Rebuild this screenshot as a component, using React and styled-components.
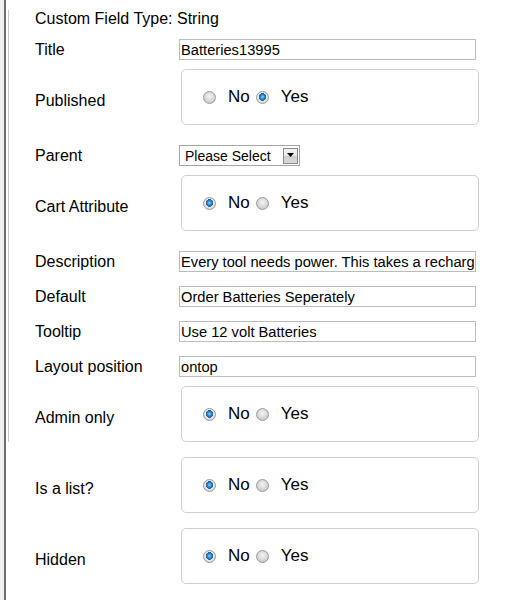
import React from "react";
import styled, { createGlobalStyle } from "styled-components";

const GlobalStyle = createGlobalStyle`
  html, body {
    margin: 0;
    padding: 0;
    background: #fff;
  }
  body {
    font-family: "Liberation Sans", Arial, sans-serif;
    color: #000;
  }
`;

const textFields = [
  { label: "Description", value: "Every tool needs power. This takes a rechargeable battery" },
  { label: "Default", value: "Order Batteries Seperately" },
  { label: "Tooltip", value: "Use 12 volt Batteries" },
  { label: "Layout position", value: "ontop" },
];

function YesNo({ name, yes }) {
  return (
    <RadioBox>
      <Radio type="radio" name={name} defaultChecked={!yes} />
      <Choice>No</Choice>
      <Radio type="radio" name={name} defaultChecked={yes} $second />
      <Choice>Yes</Choice>
    </RadioBox>
  );
}

function App() {
  return (
    <>
      <GlobalStyle />
      <Page>
        <Strip />
        <Content>
          <Section>
            <Header>Custom Field Type: String</Header>
            <Row>
              <Label>Title</Label>
              <TextInput defaultValue="Batteries13995" />
            </Row>
            <Row $radio>
              <Label $radio>Published</Label>
              <YesNo name="published" yes />
            </Row>
            <Row>
              <Label>Parent</Label>
              <FakeSelect>
                <span>Please Select</span>
                <Arrow>
                  <svg width="7" height="4" viewBox="0 0 7 4">
                    <path d="M0 0h7L3.5 4z" fill="#000" />
                  </svg>
                </Arrow>
              </FakeSelect>
            </Row>
            <Row $radio>
              <Label $radio>Cart Attribute</Label>
              <YesNo name="cart" />
            </Row>
            {textFields.map((f) => (
              <Row key={f.label}>
                <Label>{f.label}</Label>
                <TextInput defaultValue={f.value} />
              </Row>
            ))}
            <Row $radio>
              <Label $radio>Admin only</Label>
              <YesNo name="admin" />
            </Row>
          </Section>
          <Rest>
            <Row $radio>
              <Label $radio>Is a list?</Label>
              <YesNo name="list" />
            </Row>
            <Row $radio>
              <Label $radio>Hidden</Label>
              <YesNo name="hidden" />
            </Row>
          </Rest>
        </Content>
      </Page>
    </>
  );
}

export default App;

const Page = styled.div`
  display: flex;
  min-height: 600px;
`;

const Strip = styled.div`
  width: 4px;
  background: #f0f0f0;
  border-right: 2px solid #6e6e6e;
  flex-shrink: 0;
`;

const Content = styled.div`
  flex: 1;
  padding-left: 2px;
  padding-top: 10px;
`;

const Section = styled.div`
  border-left: 1px solid #c8c8c8;
  padding-left: 26px;

  & > div:last-child {
    padding-bottom: 0;
  }
`;

const Rest = styled.div`
  padding-left: 27px;
  padding-top: 13px;
`;

const Header = styled.div`
  font-size: 16px;
  line-height: 18px;
  margin-bottom: 4px;
`;

const Row = styled.div`
  display: grid;
  grid-template-columns: 144px 300px;
  align-items: center;
  padding: ${(p) => (p.$radio ? "2px 0 13px" : "7px 0")};
`;

const Label = styled.div`
  font-size: 16px;
  line-height: 18px;
  padding-top: ${(p) => (p.$radio ? "8px" : "0")};
`;

const TextInput = styled.input`
  box-sizing: border-box;
  width: 297px;
  height: 21px;
  margin: 0;
  padding: 0 1px;
  border: 1px solid #bcbcbc;
  font-family: "Liberation Sans", Arial, sans-serif;
  font-size: 14.7px;
  color: #000;
  outline: none;
`;

const FakeSelect = styled.div`
  box-sizing: border-box;
  width: 121px;
  height: 21px;
  border: 1px solid #a5a5a5;
  display: flex;
  align-items: center;
  justify-content: space-between;
  padding: 0 1px 0 5px;
  font-size: 14px;
`;

const Arrow = styled.span`
  box-sizing: border-box;
  width: 15px;
  height: 16px;
  border: 1px solid #8a8a8a;
  background: linear-gradient(#f4f4f4 0%, #e6e6e6 50%, #cfcfcf 51%, #dadada 100%);
  display: flex;
  align-items: center;
  justify-content: center;
  padding-bottom: 2px;
`;

const RadioBox = styled.div`
  box-sizing: border-box;
  width: 298px;
  height: 56px;
  margin-left: 2px;
  border: 1px solid #cfcfcf;
  border-radius: 5px;
  display: flex;
  align-items: center;
  padding-left: 21px;
`;

const Radio = styled.input`
  appearance: none;
  -webkit-appearance: none;
  box-sizing: border-box;
  width: 13px;
  height: 13px;
  margin: 0 12px 0 ${(p) => (p.$second ? "6px" : "0")};
  border-radius: 50%;
  border: 1px solid #9a9a9a;
  background: radial-gradient(circle at 50% 40%, #f4f4f4 0%, #dcdcdc 45%, #bcbcbc 100%);

  &:checked {
    background:
      radial-gradient(circle at 50% 45%, #8fd0f5 0, #2d8ad3 2px, #1b5e9c 3.6px, transparent 4px),
      radial-gradient(circle at 50% 40%, #fdfdfd 0%, #e6e6e6 55%, #c8c8c8 100%);
  }
`;

const Choice = styled.span`
  font-size: 17px;
  line-height: 20px;
`;
